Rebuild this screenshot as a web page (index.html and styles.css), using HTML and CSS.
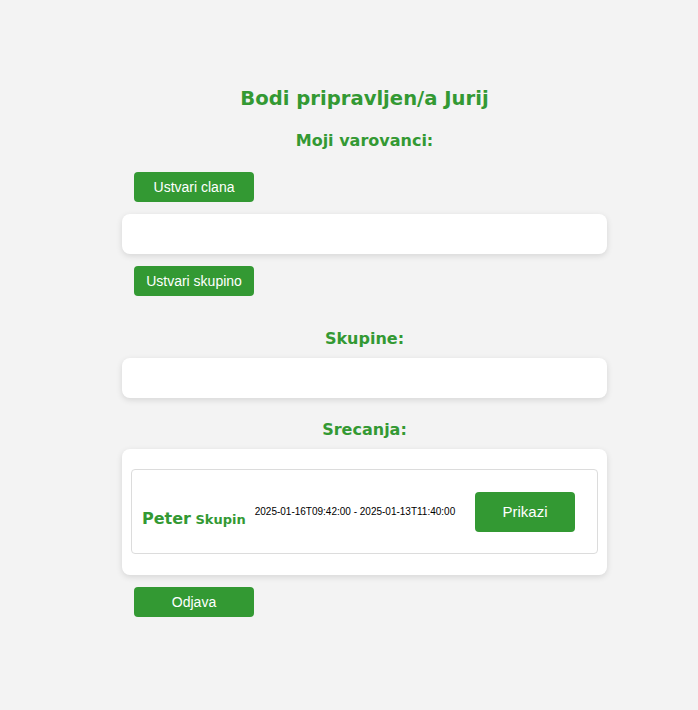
FILE: index.html
```html
<!DOCTYPE html>
<html lang="sl">
<head>
<meta charset="utf-8">
<title>Bodi pripravljen</title>
<link rel="stylesheet" href="styles.css">
</head>
<body>
<main class="page">
  <h1 class="title">Bodi pripravljen/a Jurij</h1>
  <h2 class="section-title first">Moji varovanci:</h2>
  <button class="btn small">Ustvari clana</button>
  <div class="panel empty gap-around"></div>
  <button class="btn small">Ustvari skupino</button>
  <h2 class="section-title skupine">Skupine:</h2>
  <div class="panel empty"></div>
  <h2 class="section-title srecanja">Srecanja:</h2>
  <div class="panel meetings">
    <div class="meeting">
      <div class="meeting-name"><span class="name">Peter</span> <span class="group">Skupin</span></div>
      <div class="meeting-time">2025-01-16T09:42:00 - 2025-01-13T11:40:00</div>
      <button class="btn show">Prikazi</button>
    </div>
  </div>
  <button class="btn small logout">Odjava</button>
</main>
</body>
</html>
```
FILE: styles.css
```css
html, body {
  margin: 0;
  padding: 0;
  background: #f3f3f3;
}
body {
  font-family: "Liberation Sans", Arial, sans-serif;
}
.page {
  width: 485px;
  margin-left: 122px;
  padding-top: 87px;
  display: flex;
  flex-direction: column;
}
.title {
  font-family: "DejaVu Sans", Verdana, sans-serif;
  font-size: 19.6px;
  line-height: 24px;
  font-weight: bold;
  color: #339933;
  text-align: center;
  margin: 0;
}
.section-title {
  font-family: "DejaVu Sans", Verdana, sans-serif;
  font-size: 16px;
  line-height: 20px;
  font-weight: bold;
  color: #339933;
  text-align: center;
  margin: 0;
}
.section-title.first { margin-top: 20px; margin-bottom: 21px; }
.section-title.skupine { margin-top: 33px; margin-bottom: 9px; }
.section-title.srecanja { margin-top: 22px; margin-bottom: 9px; }
.btn {
  background: #339933;
  color: #fff;
  border: none;
  border-radius: 4px;
  font-family: "Liberation Sans", Arial, sans-serif;
  cursor: pointer;
  padding: 0;
}
.btn.small {
  align-self: flex-start;
  margin-left: 12px;
  width: 120px;
  height: 30px;
  font-size: 14px;
}
.panel {
  background: #fff;
  border-radius: 8px;
  box-shadow: 0 2px 6px rgba(0, 0, 0, 0.12);
}
.panel.gap-around { margin: 12px 0; }
.panel.empty { height: 40px; }
.panel.meetings {
  padding: 20px 9px 21px;
  margin-bottom: 12px;
}
.meeting {
  border: 1px solid #dcdcdc;
  border-radius: 4px;
  height: 83px;
  display: flex;
  align-items: center;
  padding-left: 10px;
}
.meeting-name {
  padding-top: 14px;
  white-space: nowrap;
}
.name {
  font-family: "DejaVu Sans", Verdana, sans-serif;
  font-weight: bold;
  font-size: 16px;
  color: #339933;
}
.group {
  font-family: "DejaVu Sans", Verdana, sans-serif;
  font-weight: bold;
  font-size: 13px;
  color: #339933;
}
.meeting-time {
  font-size: 10px;
  color: #000;
  margin-left: 9px;
  white-space: nowrap;
}
.btn.show {
  width: 100px;
  height: 40px;
  font-size: 15px;
  margin-left: auto;
  margin-right: 22px;
}
```
